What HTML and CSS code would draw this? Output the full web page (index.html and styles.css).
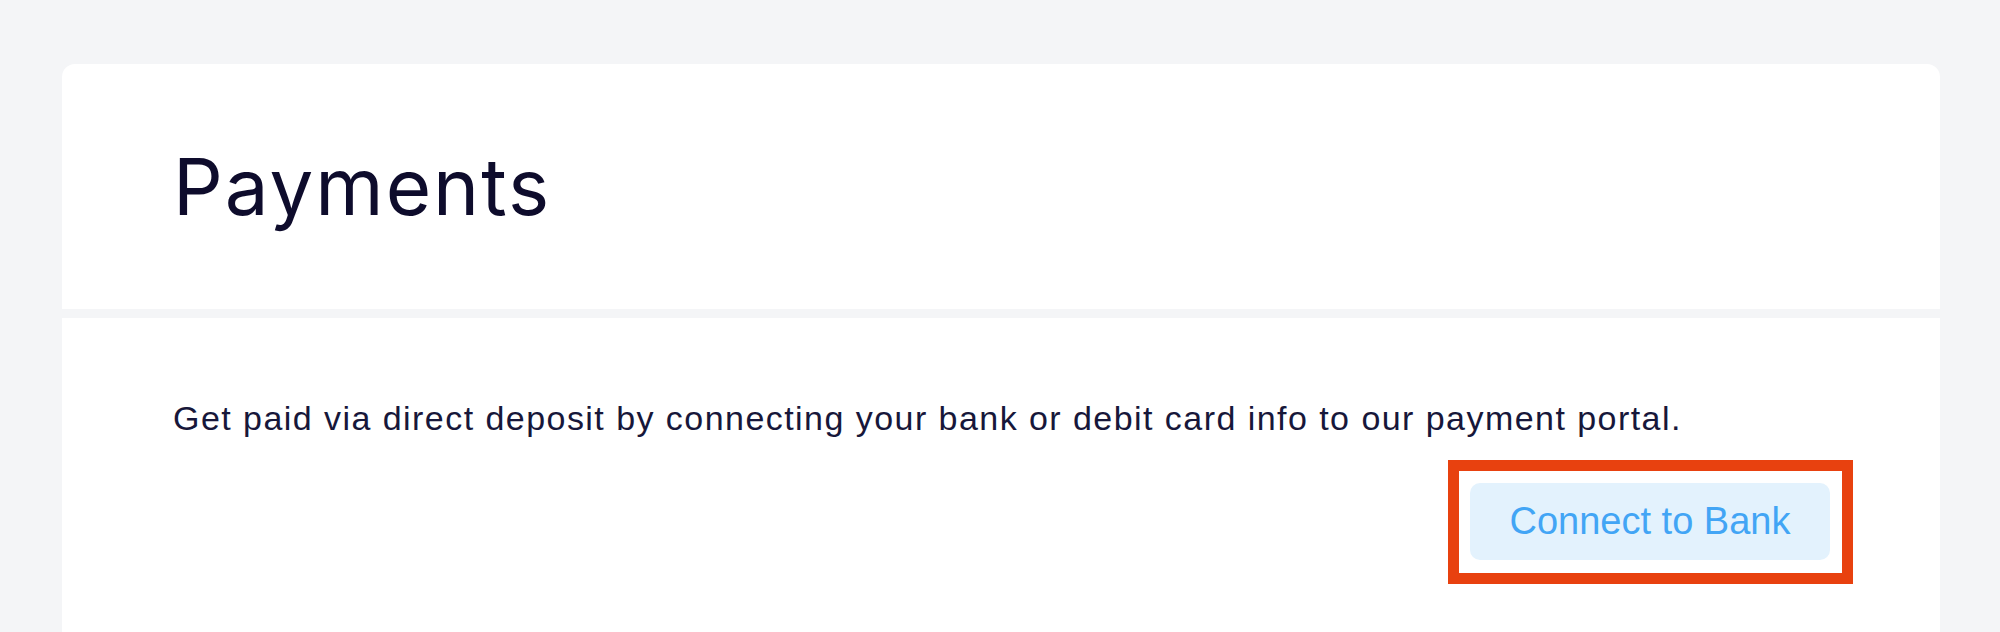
FILE: index.html
```html
<!DOCTYPE html>
<html lang="en">
<head>
<meta charset="utf-8">
<title>Payments</title>
<link rel="stylesheet" href="styles.css">
</head>
<body>
  <main class="page">
    <section class="panel panel-header">
      <h1 class="title">Payments</h1>
    </section>
    <section class="panel panel-body">
      <p class="desc">Get paid via direct deposit by connecting your bank or debit card info to our payment portal.</p>
      <div class="actions">
        <div class="highlight">
          <button class="btn-connect" type="button">Connect to Bank</button>
        </div>
      </div>
    </section>
  </main>
</body>
</html>
```
FILE: styles.css
```css
html, body {
  margin: 0;
  padding: 0;
  height: 100%;
  overflow: hidden;
}
body {
  background: #f4f5f7;
}
.page {
  display: flex;
  flex-direction: column;
  gap: 9px;
  padding: 64px 60px 0 62px;
}
.panel {
  background: #ffffff;
}
.panel-header {
  border-radius: 13px 13px 0 0;
  padding: 76px 111px 75px;
}
.title {
  margin: 0;
  font-family: Inter, "Noto Sans", sans-serif;
  font-weight: 400;
  font-size: 78px;
  line-height: 94px;
  letter-spacing: 2px;
  color: #0e0c2c;
}
.panel-body {
  padding: 80px 87px 120px 111px;
}
.desc {
  margin: 0;
  font-family: "Liberation Sans", Arial, sans-serif;
  font-size: 34px;
  line-height: 40px;
  letter-spacing: 1.45px;
  color: #17173a;
  white-space: nowrap;
}
.actions {
  display: flex;
  justify-content: flex-end;
  margin-top: 22px;
}
.highlight {
  border: 11px solid #e8410f;
  padding: 12px 12px 13px 11px;
}
.btn-connect {
  display: block;
  width: 360px;
  height: 77px;
  border: 0;
  border-radius: 10px;
  background: #e3f2fd;
  color: #42a5f5;
  font-family: "Liberation Sans", Arial, sans-serif;
  font-size: 38px;
  line-height: 77px;
  padding: 0;
  text-align: center;
  cursor: pointer;
}
```
